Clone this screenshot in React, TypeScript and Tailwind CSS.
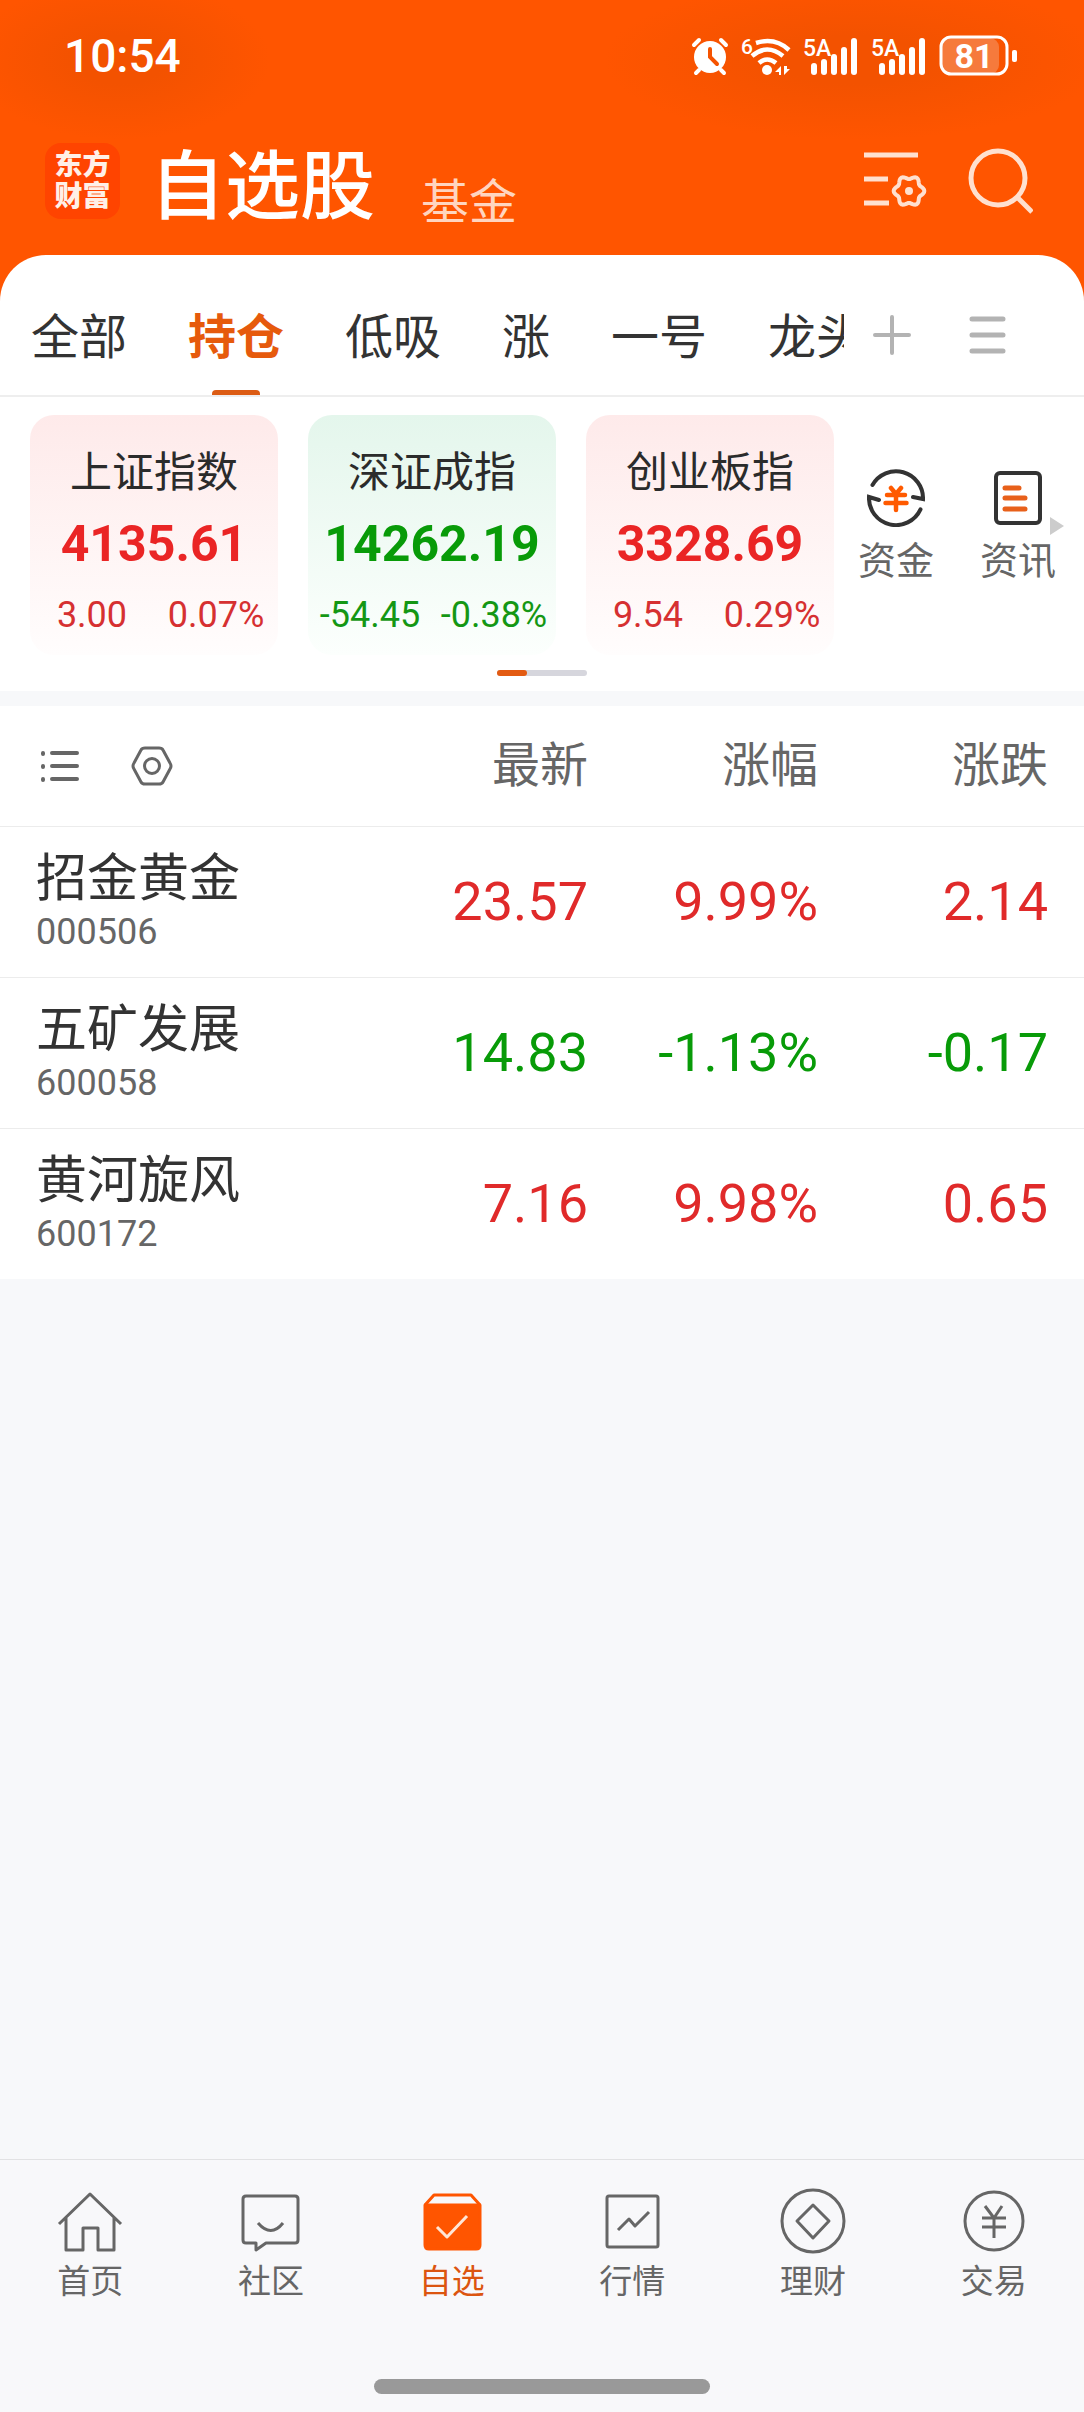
import React, { useState } from "react";

const tabs = ["全部", "持仓", "低吸", "涨", "一号", "龙头"];

const indices = [
  { name: "上证指数", value: "4135.61", change: "3.00", percent: "0.07%", up: true },
  { name: "深证成指", value: "14262.19", change: "-54.45", percent: "-0.38%", up: false },
  { name: "创业板指", value: "3328.69", change: "9.54", percent: "0.29%", up: true }
];

const stocks = [
  { name: "招金黄金", code: "000506", price: "23.57", percent: "9.99%", change: "2.14", up: true },
  { name: "五矿发展", code: "600058", price: "14.83", percent: "-1.13%", change: "-0.17", up: false },
  { name: "黄河旋风", code: "600172", price: "7.16", percent: "9.98%", change: "0.65", up: true }
];

// six-lobed gear outline around (45, 43)
const gearPoints = Array.from({ length: 72 }, (_, i) => {
  const a = (i * Math.PI) / 36;
  const r = 13.6 + 1.7 * Math.cos(6 * a);
  return `${(45 + r * Math.cos(a)).toFixed(2)},${(43 + r * Math.sin(a)).toFixed(2)}`;
}).join(" ");

const SignalIcon = () => (
  <svg width="56" height="40" viewBox="0 0 56 40" fill="white">
    <text x="0" y="20" fontSize="23" fontWeight="500">5A</text>
    <rect x="8" y="27" width="6" height="12" rx="3" />
    <rect x="18" y="23" width="6" height="16" rx="3" />
    <rect x="28" y="18" width="6" height="21" rx="3" />
    <rect x="38" y="11" width="6" height="28" rx="3" />
    <rect x="48" y="2" width="6" height="37" rx="3" />
  </svg>
);

const StatusBar = () => (
  <div className="flex h-28 items-center justify-between pl-16 pr-[67px] text-white">
    <span className="text-[46px] font-medium">10:54</span>
    <div className="flex items-center gap-3">
      <svg width="38" height="40" viewBox="0 0 38 40" fill="none" strokeLinecap="round">
        <circle cx="19" cy="21" r="16" fill="white" />
        <path d="M3 9 8 4M30 4l5 5M8 34l-3 3M30 34l3 3" stroke="white" strokeWidth="4" />
        <path d="M19 13v8l7 7" stroke="#f55300" strokeWidth="4" />
      </svg>
      <svg width="50" height="40" viewBox="0 0 50 40" fill="none" stroke="white" strokeWidth="4.5">
        <text x="0" y="18" fontSize="21" fontWeight="500" fill="white" stroke="none">6</text>
        <path d="M15 7Q34 1 48 14M11 20Q26 7 42 20M18 27Q26 20 35 27" />
        <circle cx="26" cy="34" r="5" fill="white" stroke="none" />
        <path d="M34 36l6-6v9h-2v-3zM43 30v9l6-6h-3v-3z" fill="white" stroke="none" />
      </svg>
      <SignalIcon />
      <SignalIcon />
      <svg width="78" height="42" viewBox="0 0 78 42">
        <rect x="3" y="3" width="57" height="36" rx="9" fill="#f67a3c" />
        <rect x="2" y="2" width="66" height="37" rx="10" fill="none" stroke="white" strokeWidth="3" />
        <rect x="73" y="15" width="5" height="12" rx="2" fill="white" />
        <text x="35" y="33" fontSize="34" fontWeight="700" textAnchor="middle" fill="white">81</text>
      </svg>
    </div>
  </div>
);

const TitleBar = () => (
  <div className="flex h-[143px] items-center justify-between pr-[51px] pb-[6px] pl-[45px]">
    <div className="flex items-center">
      <div className="flex h-[76px] w-[75px] flex-col items-center justify-center rounded-2xl bg-[#ff4400] text-[28px] leading-[31px] font-black text-[#fff0e8]">
        <span>东方</span>
        <span>财富</span>
      </div>
      <h1 className="ml-[30px] pt-3 text-[75px] leading-[80px] font-medium text-white">自选股</h1>
      <a href="#fund" className="ml-[46px] pt-11 text-5xl text-[#ffd5c0]">基金</a>
    </div>
    <div className="flex items-center gap-[39px]">
      <button aria-label="自选设置">
        <svg width="64" height="66" viewBox="0 0 64 66" fill="none" stroke="#ffe0cf" strokeWidth="5">
          <path d="M0 7h54M0 31h24M0 55h25" />
          <polygon points={gearPoints} strokeWidth="4" strokeLinejoin="round" />
          <circle cx="45" cy="43" r="4" fill="#ffe0cf" stroke="none" />
        </svg>
      </button>
      <button aria-label="搜索">
        <svg width="66" height="66" viewBox="0 0 66 66" fill="none" stroke="#ffe0cf" strokeWidth="5">
          <circle cx="31" cy="30" r="27" />
          <path d="M50 49l15 15" />
        </svg>
      </button>
    </div>
  </div>
);

const GroupTabs = () => {
  const [active, setActive] = useState("持仓");

  return (
    <nav className="flex h-[142px] border-b-2 border-[#eeeeee] pr-[77px]">
      <div className="flex min-w-0 flex-1 gap-[61px] overflow-hidden pl-[31px]">
        {tabs.map((tab) => (
          <button
            key={tab}
            onClick={() => setActive(tab)}
            className={`flex shrink-0 flex-col items-center justify-end text-5xl whitespace-nowrap ${
              tab === active ? "font-bold text-[#e65a0c]" : "text-[#333333]"
            }`}
          >
            <span className="pb-[17px] leading-[70px]">{tab}</span>
            <span className={`h-[5px] w-12 rounded-t-sm ${tab === active ? "bg-[#dc5c14]" : ""}`} />
          </button>
        ))}
      </div>
      <div className="ml-7 flex items-center gap-[57px] pt-5">
        <button aria-label="添加分组">
          <svg width="40" height="40" viewBox="0 0 40 40" stroke="#b3b3b3" strokeWidth="4" strokeLinecap="round">
            <path d="M20 2v36M3 20h34" />
          </svg>
        </button>
        <button aria-label="管理分组">
          <svg width="38" height="40" viewBox="0 0 38 40" stroke="#b3b3b3" strokeWidth="5" strokeLinecap="round">
            <path d="M3 4h31M3 20h31M3 36h31" />
          </svg>
        </button>
      </div>
    </nav>
  );
};

const IndexCard = ({ name, value, change, percent, up }: any) => (
  <div
    className={`flex h-60 w-[248px] shrink-0 flex-col items-center rounded-3xl bg-linear-to-b pt-[30px] ${
      up ? "from-[#feeaea] to-[#fffdfd] text-[#ea2525]" : "from-[#e4f6ec] to-[#fcfffd] text-[#089b08]"
    }`}
  >
    <span className="text-[42px] leading-[56px] text-[#2b2b2b]">{name}</span>
    <span className="mt-[14px] text-[50px] leading-[58px] font-bold">{value}</span>
    <div className={`mt-[18px] grid w-full grid-cols-2 text-center text-[36px] leading-[48px] ${up ? "text-[#d63031]" : "text-[#149714]"}`}>
      <span>{change}</span>
      <span>{percent}</span>
    </div>
  </div>
);

const MarketOverview = () => (
  <section className="bg-white pt-[18px] pb-[15px]">
    <div className="flex justify-between pr-7 pl-[30px]">
      <div className="flex gap-[30px]">
        {indices.map((item) => (
          <IndexCard key={item.name} {...item} />
        ))}
      </div>
      <div className="relative flex gap-[46px] pt-[54px] text-[38px] leading-[48px] text-[#666666]">
        <a href="#money" className="flex flex-col items-center gap-[10px]">
          <svg width="58" height="58" viewBox="0 0 58 58" fill="none" stroke="#333333" strokeWidth="4" strokeLinecap="round">
            <path d="M5.500 16A27 27 0 0 1 56 30L46 28M12 31L2 28A27 27 0 0 0 53.500 40.400" />
            <path d="M24 19l5 6 5-6M20 26h18M18.500 34h21M29 26v15" stroke="#ff5a00" strokeWidth="4.5" />
          </svg>
          资金
        </a>
        <a href="#news" className="flex flex-col items-center gap-[10px]">
          <svg width="58" height="58" viewBox="0 0 58 58" fill="none" stroke="#333333" strokeWidth="4">
            <rect x="7" y="4" width="44" height="50" rx="4" />
            <path d="M16 19h14M16 29h20M16 40h20" stroke="#e8601a" strokeWidth="5" strokeLinecap="round" />
          </svg>
          资讯
        </a>
        <svg className="absolute top-[101px] -right-2" width="14" height="20" viewBox="0 0 14 20" fill="#cccccc">
          <path d="M0 1 14 10 0 19z" />
        </svg>
      </div>
    </div>
    <div className="mx-auto mt-[15px] h-[6px] w-[90px] rounded-full bg-[#d6d6dd]">
      <div className="h-full w-[30px] rounded-full bg-[#e35b12]" />
    </div>
  </section>
);

const StockTable = () => (
  <table className="w-full table-fixed bg-white">
    <thead>
      <tr className="h-[120px] text-right text-5xl text-[#666666]">
        <th className="pl-[38px]">
          <div className="flex items-center gap-[48px]">
            <button aria-label="列表样式">
              <svg width="44" height="40" viewBox="0 0 44 40" stroke="#666666" strokeWidth="4" strokeLinecap="round">
                <path d="M5 7v1M5 20v1M5 33v1M14 7h25M14 20h25M14 33h25" />
              </svg>
            </button>
            <button aria-label="显示设置">
              <svg width="44" height="40" viewBox="0 0 44 40" fill="none" stroke="#666666" strokeWidth="3" strokeLinejoin="round">
                <path d="M15 2h14q3 0 4 2l7 13q2 3 0 6l-7 13q-1 2-4 2H15q-3 0-4-2L4 23q-2-3 0-6l7-13q1-2 4-2z" />
                <circle cx="22" cy="20" r="7.5" />
              </svg>
            </button>
          </div>
        </th>
        <th className="w-[230px] font-normal">最新</th>
        <th className="w-[230px] font-normal">涨幅</th>
        <th className="w-[266px] pr-9 font-normal">涨跌</th>
      </tr>
    </thead>
    <tbody>
      {stocks.map((stock) => (
        <tr
          key={stock.code}
          className={`h-[151px] border-t border-[#ececec] text-right text-[54px] ${
            stock.up ? "text-[#e02a2a]" : "text-[#089b08]"
          }`}
        >
          <td className="pl-9 text-left">
            <div className="text-[51px] leading-[60px] text-[#333333]">{stock.name}</div>
            <div className="text-[36px] leading-[46px] text-[#666666]">{stock.code}</div>
          </td>
          <td>{stock.price}</td>
          <td>{stock.percent}</td>
          <td className="pr-9">{stock.change}</td>
        </tr>
      ))}
    </tbody>
  </table>
);

const navItems = [
  {
    label: "首页",
    icon: <path d="M2 36 33 6l31 30M9 30v32h17V40h15v22h16V30" />
  },
  {
    label: "社区",
    icon: (
      <>
        <path d="M8 8h49q3 0 3 3v41q0 3-3 3H28l-10 7v-7H8q-3 0-3-3V11q0-3 3-3z" />
        <path d="M20 35q13 15 25 0" />
      </>
    )
  },
  {
    label: "自选",
    active: true,
    icon: (
      <>
        <path d="M6 17 15 7h37l9 10" />
        <path d="M6 17h55v40q0 4-4 4H10q-4 0-4-4z" fill="currentColor" />
        <path d="M18 39l10 10 20-21" stroke="#ffe6d6" />
      </>
    )
  },
  {
    label: "行情",
    icon: (
      <>
        <rect x="8" y="8" width="51" height="51" rx="2" />
        <path d="M19 42l11-11 6 7 14-14" />
      </>
    )
  },
  {
    label: "理财",
    icon: (
      <>
        <circle cx="33" cy="33" r="31" />
        <path d="M33 17l16 16-16 17-16-17z" />
      </>
    )
  },
  {
    label: "交易",
    icon: (
      <>
        <circle cx="33" cy="33" r="29" />
        <path d="M24 18l9 12 8-12M21 30h24M21 39h24M33 30v20" />
      </>
    )
  }
];

const BottomNav = () => (
  <nav className="border-t border-[#e2e2e4] bg-[#f8f8fa] pt-7 pb-[18px]">
    <div className="grid grid-cols-6">
      {navItems.map((item) => (
        <a
          key={item.label}
          href="#nav"
          className={`flex flex-col items-center gap-[6px] text-[33px] leading-[44px] ${
            item.active ? "text-[#ff5500]" : "text-[#666666]"
          }`}
        >
          <svg width="66" height="66" viewBox="0 0 66 66" fill="none" stroke="currentColor" strokeWidth="3" strokeLinejoin="round">
            {item.icon}
          </svg>
          <span className={item.active ? "text-[#dc5510]" : ""}>{item.label}</span>
        </a>
      ))}
    </div>
    <div className="mx-auto mt-[75px] h-[15px] w-[336px] rounded-full bg-[#999999]" />
  </nav>
);

const App: React.FC = () => {
  return (
    <div className="flex min-h-screen flex-col bg-[#f7f8fa] font-['Roboto','Noto_Sans_CJK_SC',sans-serif]">
      {/* Header */}
      <header className="bg-[#ff5500] bg-[radial-gradient(ellipse_150px_80px_at_120px_60px,#f35200_30%,transparent),radial-gradient(ellipse_250px_80px_at_calc(100%_-_230px)_60px,#f35200_30%,transparent)]">
        <StatusBar />
        <TitleBar />
      </header>

      {/* Groups and indices */}
      <div className="bg-[#ff5500]">
        <div className="rounded-t-[46px] bg-white">
          <GroupTabs />
        </div>
      </div>
      <MarketOverview />

      {/* Watch list */}
      <main className="flex-1 pt-[15px]">
        <StockTable />
      </main>

      <BottomNav />
    </div>
  );
};

export default App;
